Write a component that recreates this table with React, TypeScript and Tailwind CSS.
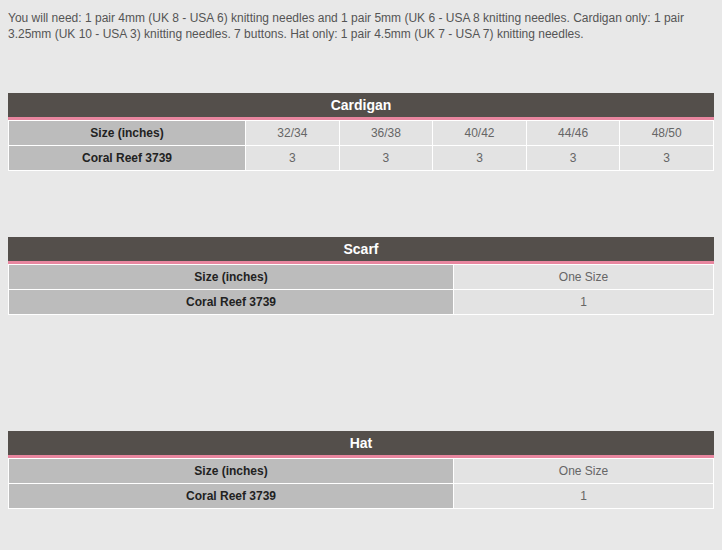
const HEADER = 'bg-[#544f4b] border-b-[3px] border-[#e8869f] h-[27px] flex items-center justify-center text-white font-bold text-[14px]';
const LABEL = 'bg-[#bcbcbc] h-[24px] flex items-center justify-center font-bold text-[12px] text-[#222]';
const VALUE = 'bg-[#e3e3e3] h-[24px] flex items-center justify-center text-[12px] text-[#666]';

function SizeTable({ title, sizes, yarn, cols }: { title: string; sizes: string[]; yarn: string[]; cols: string }) {
  return (
    <div className="w-[706px] ml-[8px]">
      <div className={HEADER}>{title}</div>
      <div className={`grid ${cols} gap-px p-px bg-white`}>
        <div className={LABEL}>Size (inches)</div>
        {sizes.map((s) => (
          <div key={s} className={VALUE}>
            {s}
          </div>
        ))}
        <div className={LABEL}>Coral Reef 3739</div>
        {yarn.map((y, i) => (
          <div key={i} className={VALUE}>
            {y}
          </div>
        ))}
      </div>
    </div>
  );
}

export default function App() {
  return (
    <div className="w-[722px] h-[550px] bg-[#e8e8e8] overflow-hidden font-['Liberation_Sans',Arial,sans-serif]">
      <p className="pt-[10px] px-[8px] text-[12px] leading-[16px] text-[#555]">
        You will need: 1 pair 4mm (UK 8 - USA 6) knitting needles and 1 pair 5mm (UK 6 - USA 8 knitting needles. Cardigan only: 1 pair 3.25mm (UK 10 - USA 3) knitting needles. 7 buttons. Hat only: 1 pair 4.5mm (UK 7 - USA 7) knitting needles.
      </p>

      <div className="mt-[51px]">
        <SizeTable
          title="Cardigan"
          sizes={['32/34', '36/38', '40/42', '44/46', '48/50']}
          yarn={['3', '3', '3', '3', '3']}
          cols="grid-cols-[236px_repeat(5,1fr)]"
        />
      </div>

      <div className="mt-[66px]">
        <SizeTable title="Scarf" sizes={['One Size']} yarn={['1']} cols="grid-cols-[444px_1fr]" />
      </div>

      <div className="mt-[116px]">
        <SizeTable title="Hat" sizes={['One Size']} yarn={['1']} cols="grid-cols-[444px_1fr]" />
      </div>
    </div>
  );
}
